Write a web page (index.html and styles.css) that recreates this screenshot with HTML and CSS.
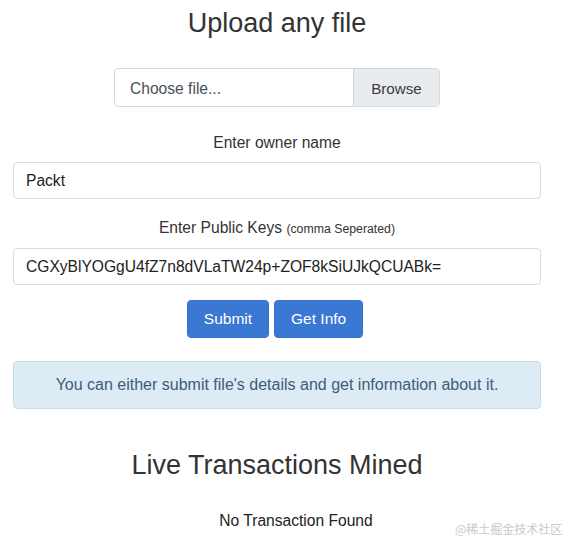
FILE: index.html
```
<!DOCTYPE html>
<html lang="en">
<head>
    <meta charset="UTF-8">
    <title>Upload any file</title>
    <link rel="stylesheet" href="styles.css">
</head>
<body>
    <div id="container">
        <h3 class="title">Upload any file</h3>

        <div class="file-row">
            <div class="custom-file">
                <span class="file-label">Choose file...</span>
                <span class="file-browse">Browse</span>
            </div>
        </div>

        <div class="form-group first">
            <label class="form-label">Enter owner name</label>
            <div class="form-control">Packt</div>
        </div>

        <div class="form-group">
            <label class="form-label">Enter Public Keys <small>(comma Seperated)</small></label>
            <div class="form-control">CGXyBlYOGgU4fZ7n8dVLaTW24p+ZOF8kSiUJkQCUABk=</div>
        </div>

        <div class="btn-row">
            <button class="btn btn-primary">Submit</button>
            <button class="btn btn-primary">Get Info</button>
        </div>

        <div class="alert alert-info">You can either submit file's details and get information about it.</div>

        <h2 class="title live">Live Transactions Mined</h2>

        <div class="empty">No Transaction Found</div>
    </div>
    <div class="watermark">@稀土掘金技术社区</div>
</body>
</html>
```

FILE: styles.css
```
*{
    padding:0;
    margin:0;
    box-sizing:border-box;
}
body{
    font-family:"Liberation Sans", Arial, sans-serif;
    font-size:15.6px;
    color:#333;
    background:#fff;
}
#container{
    width:528px;
    margin-left:13px;
    padding-top:7px;
    text-align:center;
}
.title{
    font-size:27px;
    line-height:32px;
    font-weight:normal;
    color:#333;
}
.file-row{
    margin-top:29px;
    display:flex;
    justify-content:center;
}
.custom-file{
    width:326px;
    height:39px;
    display:flex;
    border:1px solid #d6d9dc;
    border-radius:4px;
    overflow:hidden;
    color:#495057;
}
.file-label{
    flex:1;
    text-align:left;
    padding:2px 0 0 15px;
    line-height:35px;
    font-size:15.6px;
}
.file-browse{
    width:86px;
    background:#e9ecef;
    border-left:1px solid #d6d9dc;
    padding-top:2px;
    line-height:35px;
    font-size:15.2px;
    color:#3a3a3a;
}
.form-group{
    margin-top:17px;
}
.form-group.first{
    margin-top:24px;
}
.form-label{
    display:block;
    line-height:24px;
    margin-bottom:7px;
    color:#333;
}
.form-label small{
    font-size:12.3px;
}
.form-control{
    height:37px;
    line-height:35px;
    padding-left:12px;
    text-align:left;
    border:1px solid #dadde0;
    border-radius:4px;
    color:#222;
}
.btn-row{
    margin-top:15px;
    padding-right:4px;
    display:flex;
    justify-content:center;
    gap:5px;
}
.btn{
    font-family:inherit;
    font-size:15.5px;
    height:38px;
    padding:0 16px;
    border:1px solid #3572cc;
    border-radius:4px;
    color:#fff;
}
.btn-primary{
    background:#3a78d3;
}
.alert{
    margin-top:23px;
    padding:11px 15px;
    line-height:24px;
    border:1px solid #c4dfec;
    border-radius:4px;
}
.alert-info{
    background:#dcebf4;
    color:#3f5b7d;
    font-size:16px;
}
.live{
    margin-top:40px;
}
.empty{
    margin-top:30px;
    padding-left:38px;
    font-size:15.6px;
    line-height:20px;
    color:#222;
}
.watermark{
    position:absolute;
    left:455px;
    top:521px;
    font-family:"Noto Sans CJK SC", sans-serif;
    font-size:12px;
    line-height:16px;
    color:#c9c9c9;
}
```
